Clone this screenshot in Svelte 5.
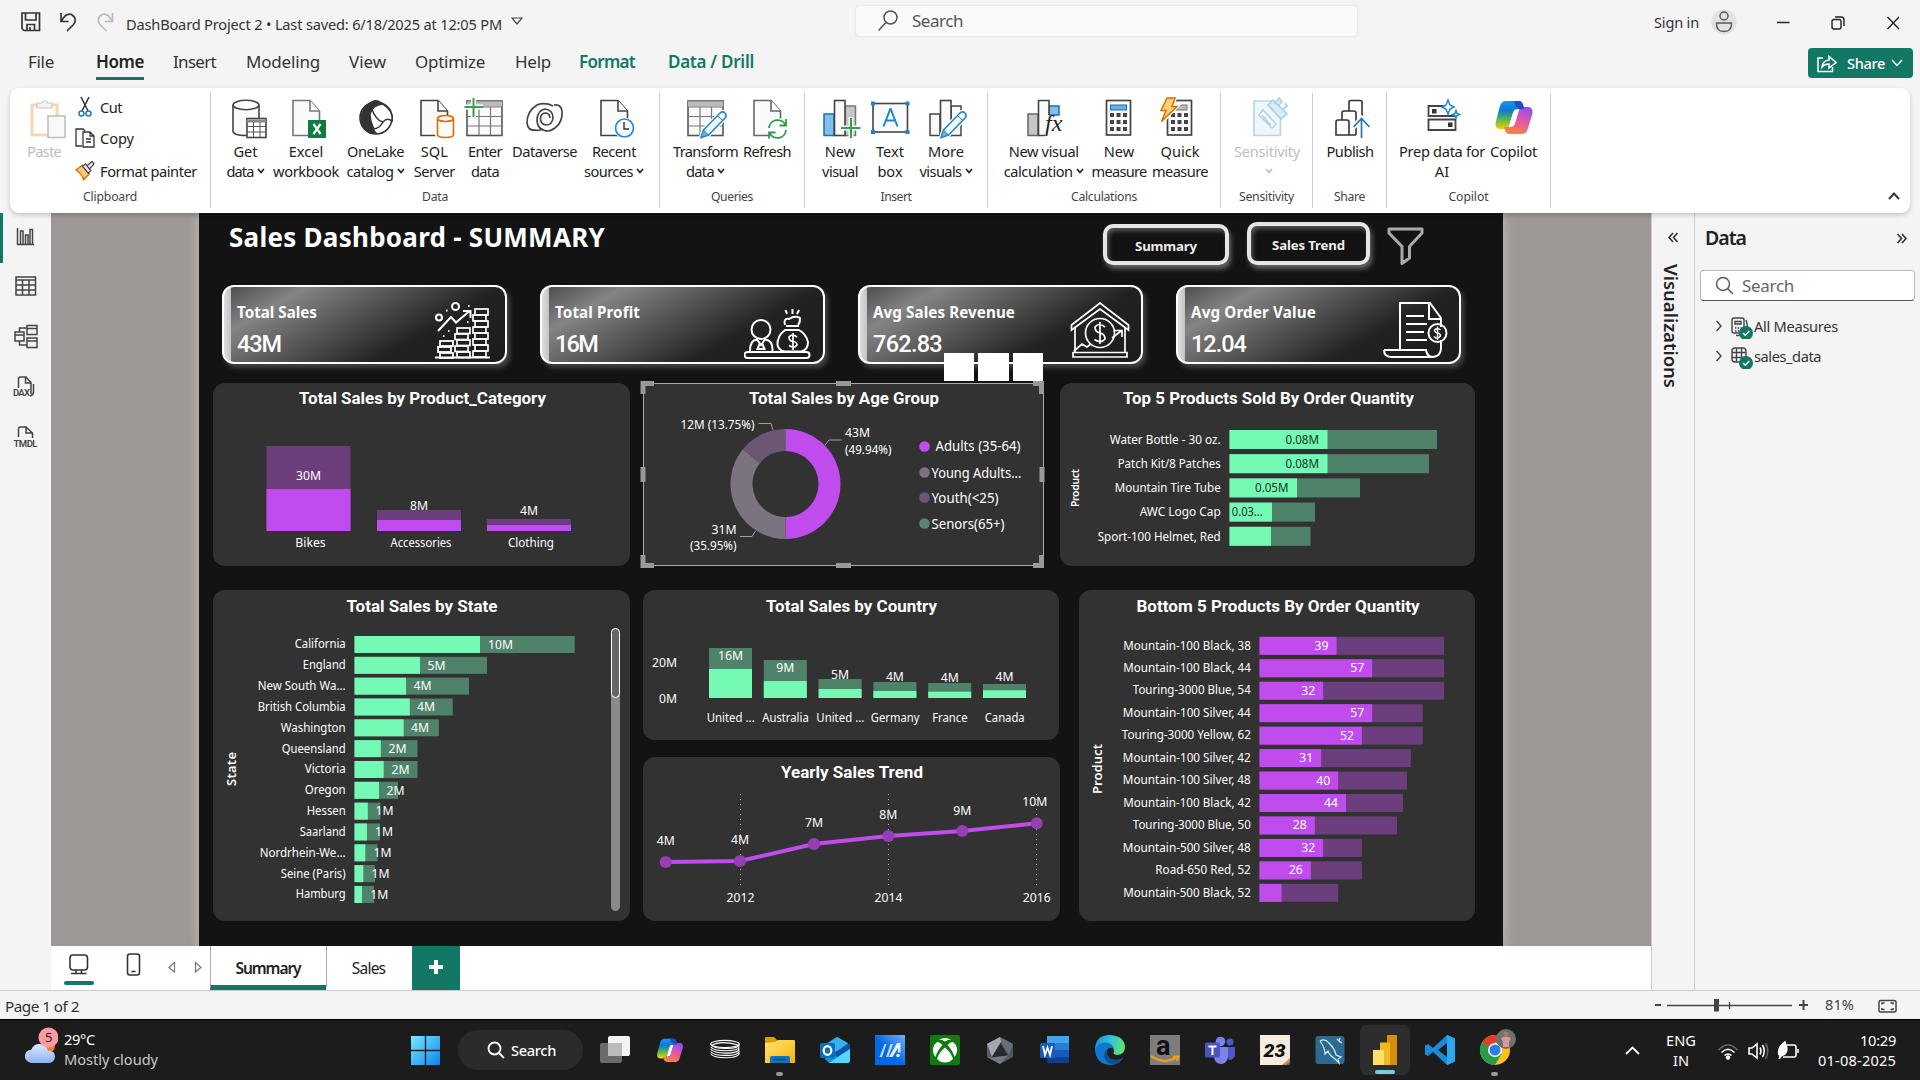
<script>
  // Tightens or loosens tracking so a label takes exactly the given width.
  function fit(node, width) {
    if (!width) return;
    const range = document.createRange();
    range.selectNodeContents(node);
    const now = range.getBoundingClientRect().width;
    node.style.letterSpacing = (width - now) / node.textContent.length + 'px';
  }

  const menu = [
    { t: 'File', w: 26, g: 28 }, { t: 'Home', w: 48, g: 42, cls: 'active' }, { t: 'Insert', w: 43, g: 29 },
    { t: 'Modeling', w: 74, g: 30 }, { t: 'View', w: 37, g: 29 }, { t: 'Optimize', w: 70, g: 29 },
    { t: 'Help', w: 36, g: 30 }, { t: 'Format', w: 56, g: 28, cls: 'ctx' }, { t: 'Data / Drill', w: 86, g: 33, cls: 'ctx' }
  ];

  const groups = [
    { name: 'Data', w: 449, pad: 11, lw: 26, items: [
      { i: 'get', w: 47, a: 'Get', b: 'data', v: 1, bw: 27 }, { i: 'excel', w: 74, a: 'Excel', b: 'workbook', bw: 66 },
      { i: 'onelake', w: 65, a: 'OneLake', b: 'catalog', v: 1, aw: 57, bw: 47 }, { i: 'sql', w: 52.6, a: 'SQL', b: 'Server', bw: 41 },
      { i: 'enter', w: 48.8, a: 'Enter', b: 'data', aw: 34, bw: 28 }, { i: 'dataverse', w: 70.4, a: 'Dataverse', aw: 65 },
      { i: 'recent', w: 68.4, a: 'Recent', b: 'sources', v: 1, aw: 44, bw: 49 }] },
    { name: 'Queries', w: 145, pad: 8.5, lw: 42, items: [
      { i: 'transform', w: 74, a: 'Transform', b: 'data', v: 1, aw: 65, bw: 28 }, { i: 'refresh', w: 49, a: 'Refresh', aw: 48 }] },
    { name: 'Insert', w: 183, pad: 10, lw: 31, items: [
      { i: 'newvis', w: 50, a: 'New', b: 'visual', bw: 36 }, { i: 'textbox', w: 50, a: 'Text', b: 'box' },
      { i: 'morevis', w: 62, a: 'More', b: 'visuals', v: 1, bw: 42 }] },
    { name: 'Calculations', w: 233, pad: 10, lw: 66, items: [
      { i: 'calcvis', w: 91.4, a: 'New visual', b: 'calculation', v: 1, aw: 70, bw: 69 }, { i: 'measure', w: 59.2, a: 'New', b: 'measure', bw: 55 },
      { i: 'quick', w: 62.8, a: 'Quick', b: 'measure', bw: 56 }] },
    { name: 'Sensitivity', w: 92, pad: 10, lw: 55, items: [{ i: 'sens', w: 72, a: 'Sensitivity', b: '', v: 1, aw: 66, off: 1 }] },
    { name: 'Share', w: 74, pad: 12, lw: 31, items: [{ i: 'publish', w: 50, a: 'Publish', aw: 47 }] },
    { name: 'Copilot', w: 164, pad: 9, lw: 40, items: [
      { i: 'prep', w: 92, a: 'Prep data for', b: 'AI', aw: 86 }, { i: 'copilot', w: 51, a: 'Copilot', aw: 47 }] }
  ];

  const kpis = [
    { t: 'Total Sales', tw: 80, v: '43M', vw: 44, box: '426 301 68 60' },
    { t: 'Total Profit', tw: 85, v: '16M', vw: 42, box: '744 301 68 60' },
    { t: 'Avg Sales Revenue', tw: 142, v: '762.83', vw: 69, box: '1062 301 68 60' },
    { t: 'Avg Order Value', tw: 125, v: '12.04', vw: 55, box: '1380 301 68 60' }
  ];

  const categories = [
    { x: 266.5, top: 446, mid: 489, v: '30M', ly: 475.5, n: 'Bikes' },
    { x: 377, top: 510, mid: 520, v: '8M', ly: 505.5, n: 'Accessories', nw: 61 },
    { x: 487, top: 519, mid: 525, v: '4M', ly: 511, n: 'Clothing', nw: 46 }
  ];

  const top5 = [
    ['Water Bottle - 30 oz.', 1327.5, 1437, '0.08M', 111], ['Patch Kit/8 Patches', 1327.5, 1429, '0.08M', 103],
    ['Mountain Tire Tube', 1297, 1360, '0.05M', 106], ['AWC Logo Cap', 1272, 1315, '0.03...', 81], ['Sport-100 Helmet, Red', 1271, 1310.5, '', 123]
  ];

  const states = [
    ['California', 480, 574.7, '10M', 488], ['England', 420, 487, '5M', 427.5], ['New South Wa...', 406, 469, '4M', 413.5],
    ['British Columbia', 409.8, 452.7, '4M', 417], ['Washington', 403.7, 438.8, '4M', 411], ['Queensland', 380.8, 417.5, '2M', 388.5],
    ['Victoria', 383.7, 417.5, '2M', 391.5], ['Oregon', 379, 398, '2M', 386.5], ['Hessen', 367.8, 380.4, '1M', 375.5],
    ['Saarland', 367, 380, '1M', 375], ['Nordrhein-We...', 365.3, 377.5, '1M', 373.5], ['Seine (Paris)', 363.3, 375, '1M', 371.5],
    ['Hamburg', 362, 374, '1M', 370.3]
  ];
  const stateW = [51, 43, 88, 88, 65, 64, 41, 41, 39, 46, 86, 65, 50];

  const countries = [
    ['United ...', 648, 669, '16M', 655.7, 48], ['Australia', 660, 681, '9M', 667.7, 46.5], ['United ...', 679, 689, '5M', 675, 48],
    ['Germany', 682, 691, '4M', 676.7, 48.5], ['France', 683, 691.7, '4M', 677.7, 35.5], ['Canada', 684, 690.3, '4M', 676.7, 40]
  ];

  const bottom = [
    ['Mountain-100 Black, 38', 750, 1022, '39'], ['Mountain-100 Black, 44', 840, 1022, '57'], ['Touring-3000 Blue, 54', 716, 1022, '32'],
    ['Mountain-100 Silver, 44', 840, 968, '57'], ['Touring-3000 Yellow, 62', 814, 968, '52'], ['Mountain-100 Silver, 42', 711, 938, '31'],
    ['Mountain-100 Silver, 48', 754, 928, '40'], ['Mountain-100 Black, 42', 774, 918, '44'], ['Touring-3000 Blue, 50', 695, 903, '28'],
    ['Mountain-500 Silver, 48', 716, 814, '32'], ['Road-650 Red, 52', 685, 814, '26'], ['Mountain-500 Black, 52', 611, 754, '']
  ].map(([n, a, b, v]) => [n, 1040 + a / 2.529, 1040 + b / 2.529, v]);
  const bottomW = [127.5, 127.5, 118, 128, 129, 128, 128, 127.5, 118, 128, 95.5, 127.5];

  const years = [
    [665.7, 862, '4M', 840.7], [740, 861, '4M', 839.7], [814, 844, '7M', 822.7],
    [888.3, 836, '8M', 814.7], [962.3, 831, '9M', 810.7], [1036.7, 823.3, '10M', 801.7]
  ];

  const polar = (r, f) => `${785.5 + r * Math.sin(f * 2 * Math.PI)},${484 - r * Math.cos(f * 2 * Math.PI)}`;
  const arc = (a, b) => `M${polar(55, a)}A55,55 0 0 1 ${polar(55, b)}L${polar(33, b)}A33,33 0 0 0 ${polar(33, a)}Z`;

  const apps = ['task', 'copilot', 'disc', 'folder', 'outlook', 'mdesign', 'xbox', 'gem', 'word', 'edge', 'amazon', 'teams', 'cal', 'mysql', 'pbi', 'vscode', 'chrome'];
</script>

{#snippet txt(x, y, s, a = 'middle', w = undefined, cls = '')}
  <text {x} y={y + 4} text-anchor={a} textLength={w} lengthAdjust="spacingAndGlyphs" class={cls}>{s}</text>
{/snippet}

{#snippet head(x, y, s, w)}
  <text {x} y={y + 5.8} text-anchor="middle" textLength={w} lengthAdjust="spacingAndGlyphs" class="head">{s}</text>
{/snippet}

{#snippet sheet(c = '#444')}
  <path d="M7 3.5H24L33.5 14V38.5H7Z" fill="#fafafa" stroke={c} stroke-width="1.6" />
  <path d="M24 3.5V14H33.5" fill="#fff" stroke={c} stroke-width="1.6" />
{/snippet}

{#snippet pencil()}
  <path d="M15 40.5L17.5 33L34.5 15.5Q37 14 39 16T39.5 20.5L22.5 38Z" fill="#fff" stroke="#fff" stroke-width="4" />
  <path d="M15 40.5L17.5 33L34.5 15.5Q37 14 39 16T39.5 20.5L22.5 38Z" fill="#f4faff" stroke="#1a86d0" stroke-width="1.5" />
  <path d="M15 40.5L17.5 33L22.5 38Z" fill="#69aee6" stroke="#1a86d0" />
  <path d="M31.5 18.5L36.5 23.5" stroke="#1a86d0" />
{/snippet}

{#snippet calculator()}
  <rect x="7.5" y="3.5" width="24" height="34.5" fill="#fafafa" stroke="#444" stroke-width="1.7" />
  {#each [16, 23, 30] as y}{#each [11, 17.5, 24] as x}<rect {x} {y} width="4" height="4" fill="#444" />{/each}{/each}
{/snippet}

{#snippet copilotMark()}
  <path d="M12 4H25Q28 4 29 8L30 12H24Q20 12 19 16L15 29Q14 32 10 32H6Q0 32 2 24L6 9Q7.500 4 12 4Z" fill="url(#cpA)" />
  <path d="M28 37H15Q12 37 11 33L10 30H16Q20 30 21 26L25 13Q26 10 30 10H34Q40 10 38 18L34 31Q32.500 37 28 37Z" fill="url(#cpB)" />
  <path d="M20 4H25Q28 4 29.500 9L30 12H26Q22 12 20 4Z" fill="#1a4fc9" />
  <path d="M19 16Q20 12.500 23 12.500H25L21 26Q20 29.500 17 29.500H15Z" fill="#fff" />
{/snippet}

{#snippet icon(n)}
  <svg class="ico" viewBox="0 0 40 42" width="40" height="42">
    {#if n === 'get'}
      <path d="M7 8V34C7 37 13 38.500 20 38.500S33 37 33 34V8" fill="#fafafa" stroke="#444" stroke-width="1.6" />
      <ellipse cx="20" cy="8" rx="13" ry="4.700" fill="#fff" stroke="#444" stroke-width="1.6" />
      <rect x="21" y="21.500" width="19" height="19" fill="#fff" stroke="#444" stroke-width="1.6" />
      <path d="M21 24H40" stroke="#888" stroke-width="3" /><path d="M21 29.500H40M21 35H40M27.500 25V40M34 25V40" stroke="#555" />
    {:else if n === 'excel'}
      {@render sheet('#777')}<rect x="22" y="23" width="18" height="18" fill="#107c41" />
      <path d="M27.500 27L34.500 37M34.500 27L27.500 37" stroke="#fff" stroke-width="2.200" />
    {:else if n === 'onelake'}
      <circle cx="20" cy="21" r="16" fill="#fff" stroke="#333" stroke-width="1.6" />
      <path d="M12 7Q20 -1 27 7Q17 6 14 17Q14 25 19 34Q22 37.500 24 36Q12 39 6 29Q1 16 12 7Z" fill="#333" />
      <path d="M14 17Q16 8 27 7Q38 14 36 24Q31 20 27 25Q24 31 18 32Q14 24 14 17Z" fill="#fff" stroke="#333" stroke-width="1.500" />
      <path d="M15 10Q20 24 27 25" stroke="#333" stroke-width="1.500" fill="none" />
    {:else if n === 'sql'}
      {@render sheet()}
      <path d="M23.500 22V37C23.500 42 39.500 42 39.500 37V22" fill="#fff" stroke="#fff" stroke-width="5" />
      <path d="M23.500 22V37.500C23.500 41.500 39.500 41.500 39.500 37.500V22" fill="#fafafa" stroke="#dd6b00" stroke-width="1.6" />
      <ellipse cx="31.500" cy="21.500" rx="8" ry="3" fill="#fff" stroke="#dd6b00" stroke-width="1.6" />
    {:else if n === 'enter'}
      <rect x="2" y="4" width="35" height="34.500" fill="#fafafa" stroke="#555" stroke-width="1.6" />
      <path d="M2 7H37" stroke="#bbb" stroke-width="5" /><path d="M2 19.500H37M2 29H37M14 10V38M25.500 10V38M2 10H37" stroke="#777" stroke-width="1.200" />
      <path d="M8.500 -1V20M-1.500 10H18" stroke="#fff" stroke-width="5" /><path d="M8.500 1V20M-.5 10H18" stroke="#36a04f" stroke-width="2" />
    {:else if n === 'dataverse'}
      <g fill="none" stroke="#444" stroke-width="1.700"><path d="M29 8Q36 7 37 14Q38 29 24 34Q12 34 12 22Q13 13 20 12Q28 13 28 21Q27 28 21 28Q15 27 15.500 21Q16 16 21 16Q25 17 25 21" />
      <path d="M28 9Q20 5 12 8Q2 14 2 26Q3 34 10 33Q14 34 18 32" /></g>
    {:else if n === 'recent'}
      {@render sheet()}<circle cx="30.500" cy="31" r="10.500" fill="#fff" /><circle cx="30.500" cy="31" r="9" fill="#f6fbff" stroke="#2a88c8" stroke-width="1.700" />
      <path d="M30 25V32H35" fill="none" stroke="#333" stroke-width="1.400" />
    {:else if n === 'transform'}
      <rect x="2" y="4" width="35" height="34.500" fill="#fafafa" stroke="#555" stroke-width="1.6" />
      <path d="M2 7H37" stroke="#bbb" stroke-width="5" /><path d="M2 19.500H37M2 29H37M14 10V38M25.500 10V38M2 10H37" stroke="#777" stroke-width="1.200" />
      {@render pencil()}
    {:else if n === 'refresh'}
      {@render sheet('#666')}<circle cx="30.500" cy="32" r="11" fill="#fff" />
      <path d="M22 31A8.700 8.700 0 0 1 38.500 28M39 33A8.700 8.700 0 0 1 22.500 36M39 22V28.500H32.500M22 41.500V35.500H28.500" fill="none" stroke="#2f9a4a" stroke-width="1.800" />
    {:else if n === 'newvis'}
      <rect x="4" y="17" width="10" height="21.500" fill="#83beec" stroke="#1a6fb5" stroke-width="1.500" /><rect x="25" y="9" width="10.500" height="29.500" fill="#c8c6c4" stroke="#777" stroke-width="1.500" />
      <rect x="14.500" y="3.500" width="10.500" height="35" fill="#fafafa" stroke="#444" stroke-width="1.6" />
      <path d="M31 20V41M20 31H41" stroke="#fff" stroke-width="5" /><path d="M31 21V41M21 31H40.500" stroke="#36a04f" stroke-width="2.200" />
    {:else if n === 'textbox'}
      <rect x="3" y="6.500" width="34.500" height="28.500" fill="#fafafa" stroke="#444" stroke-width="1.6" />
      <path d="M13.500 29.500L20.300 12H20.700L27.500 29.500M16 23.500H25" fill="none" stroke="#1a86d0" stroke-width="2" />
      {#each [1, 35.5] as x}{#each [4.5, 33] as y}<rect {x} {y} width="4" height="4" fill="#1a86d0" />{/each}{/each}
    {:else if n === 'morevis'}
      <rect x="4" y="17" width="10" height="21.500" fill="#fafafa" stroke="#444" stroke-width="1.500" /><rect x="25" y="9" width="10" height="29.500" fill="#fafafa" stroke="#444" stroke-width="1.500" />
      <rect x="14.500" y="3.500" width="10.500" height="35" fill="#fafafa" stroke="#444" stroke-width="1.6" />{@render pencil()}
    {:else if n === 'calcvis'}
      <rect x="4" y="17" width="10" height="21.500" fill="#c8c6c4" stroke="#666" stroke-width="1.500" /><rect x="25" y="9" width="10" height="9" fill="#83beec" stroke="#1a6fb5" stroke-width="1.500" />
      <path d="M21 38.500H14.500V3.500H25V18" fill="#fafafa" stroke="#444" stroke-width="1.6" />
      <text x="21" y="34" class="fx">fx</text>
    {:else if n === 'measure'}
      {@render calculator()}<rect x="11.500" y="8" width="16" height="5" fill="#69aee6" stroke="#1a6fb5" />
    {:else if n === 'quick'}
      {@render calculator()}<rect x="16" y="8" width="11" height="5" fill="#bbb" stroke="#777" />
      <path d="M6 1H15L12 9H17L2 25L6 13H0Z" fill="#fff" stroke="#fff" stroke-width="4" /><path d="M7 1H15L12 9.500H17L1.500 24.500L6 13.500H1Z" fill="#fbd079" stroke="#dd6b00" stroke-width="1.500" />
    {:else if n === 'sens'}
      <g opacity=".75"><path d="M7 4H24L33.500 14V38.500H7Z" fill="#eaf4fb" stroke="#9fc9e6" stroke-width="1.700" />
      <path d="M12 18L16 13L29 27L25 31ZM15 18L24 28" fill="#fff" stroke="#8fc1e2" stroke-width="1.500" />
      <path d="M21 8L26 3L40 17L34 22ZM27 7L32 1L35 5L31 9M36 12L40 9L38 6" fill="#cde5f4" stroke="#8fc1e2" stroke-width="1.700" /></g>
    {:else if n === 'publish'}
      <path d="M6 38V25Q6 23 8 23H17Q19 23 19 25V38ZM12 23V16Q12 14 14 14H24Q26 14 26 16V38M19 38H26M19 14V5Q19 3.500 21 3.500H30Q32 3.500 32 5V20" fill="none" stroke="#333" stroke-width="1.6" />
      <path d="M31.500 41V22M23.500 30L31.500 21.500L39.500 30" fill="none" stroke="#fff" stroke-width="5" /><path d="M31.500 41V22M23.500 30L31.500 21.500L39.500 30" fill="none" stroke="#2878ac" stroke-width="1.700" />
    {:else if n === 'prep'}
      <path d="M24 9H6.500V19H34M6.500 22.500H33.500V33H6.500Z" fill="#fafafa" stroke="#444" stroke-width="1.800" /><rect x="10" y="12" width="4.500" height="4.500" fill="#333" /><rect x="26" y="25.500" width="4.500" height="4.500" fill="#333" />
      <path d="M26 3L28 8L32 10L28 12L26 17L24 12L20 10L24 8ZM34 13.500L35 16.500L37.500 17.500L35 18.500L34 21L33 18.500L30.500 17.500L33 16.500Z" fill="#fff" stroke="#1a86d0" stroke-width="1.500" />
    {:else}{@render copilotMark()}{/if}
  </svg>
{/snippet}

<svg width="0" height="0" class="defs">
  <defs>
    <linearGradient id="cpA" x1="0" y1="0" x2="0" y2="1"><stop offset="0" stop-color="#0b9bf0" /><stop offset=".35" stop-color="#1474d8" /><stop offset=".6" stop-color="#3fb45c" /><stop offset="1" stop-color="#f5d000" /></linearGradient>
    <linearGradient id="cpB" x1=".6" y1="0" x2=".2" y2="1"><stop offset="0" stop-color="#9b4df0" /><stop offset=".5" stop-color="#ea5a9a" /><stop offset="1" stop-color="#f98a3a" /></linearGradient>
    <linearGradient id="edge" x1="0" y1=".3" x2="1" y2=".5"><stop offset="0" stop-color="#1b8fe0" /><stop offset=".5" stop-color="#35c1d8" /><stop offset="1" stop-color="#62e36a" /></linearGradient>
    <linearGradient id="win" x1="0" y1="0" x2="1" y2="1"><stop offset="0" stop-color="#78eaff" /><stop offset="1" stop-color="#0a84f0" /></linearGradient>
    <linearGradient id="cloud" x1="0" y1="0" x2="0" y2="1"><stop offset="0" stop-color="#dbe8ff" /><stop offset="1" stop-color="#8db4f2" /></linearGradient>
    <linearGradient id="fold" x1="0" y1="0" x2="1" y2="1"><stop offset="0" stop-color="#ffe27a" /><stop offset="1" stop-color="#f8b500" /></linearGradient>
    <linearGradient id="md" x1="0" y1="1" x2="1" y2="0"><stop offset=".45" stop-color="#0368e6" /><stop offset="1" stop-color="#6fb0fb" /></linearGradient>
  </defs>
</svg>

<div class="window">
  <header class="titlebar">
    <svg class="quick" width="96" height="24" viewBox="20 10 96 24" fill="none" stroke="#333" stroke-width="1.700">
      <path d="M22 13H39.500V30.500H24L22 28.500ZM25.500 13V20H36V13M27 30V24.500H34.500V30M30 27V30" />
      <path d="M61 13V21.500H68.500M61.500 21Q66 12.500 71.500 14.500Q78 18.500 73.500 24.500L67 31" />
      <path d="M112.500 13V21.500H105M112 21Q107.500 12.500 102 14.500Q95.500 18.500 100 24.500L106.500 31" stroke="#bbb" />
    </svg>
    <span class="doc" use:fit={376}>DashBoard Project 2 • Last saved: 6/18/2025 at 12:05 PM</span>
    <svg class="tri" width="12" height="8" viewBox="0 0 12 8" fill="none" stroke="#444" stroke-width="1.200"><path d="M1 1H11L6 7Z" /></svg>
    <div class="search">
      <svg width="20" height="22" viewBox="0 0 20 22" fill="none" stroke="#555" stroke-width="1.500"><circle cx="12.500" cy="7.500" r="6.500" /><path d="M8 12.500L.5 20.500" /></svg>
      <span use:fit={51}>Search</span>
    </div>
    <span class="signin" use:fit={45}>Sign in</span>
    <svg class="avatar" width="26" height="26" viewBox="0 0 26 26"><circle cx="13" cy="13" r="12.500" fill="#e3e1df" /><g fill="none" stroke="#555" stroke-width="1.400"><circle cx="13" cy="7" r="4" /><path d="M5.500 14H20.500Q21 22.500 13 22.500T5.500 14Z" /></g></svg>
    <svg class="winbtns" width="124" height="16" viewBox="1776 15 124 16" fill="none" stroke="#222" stroke-width="1.400"><path d="M1777 22.500H1789.500M1887.500 17L1899 29M1899 17L1887.500 29" /><rect x="1832" y="19.500" width="9" height="9.500" rx="2" /><path d="M1835 17H1841Q1844 17 1844 20V26" /></svg>
  </header>

  <nav class="menubar">
    {#each menu as m}<span class="mi {m.cls ?? ''}" style="margin-left:{m.g}px;width:{m.w}px"><b use:fit={m.w}>{m.t}</b></span>{/each}
    <button class="share">
      <svg width="20" height="20" viewBox="0 0 20 20" fill="none" stroke="#fff" stroke-width="1.500"><path d="M6 5H1V18.500H15.500V14M5 14Q6 7.500 12 7V3.500L19 9.500L12 15V11Q7.500 11 5 14Z" /></svg>
      <span use:fit={38}>Share</span>
      <svg width="12" height="8" viewBox="0 0 12 8" fill="none" stroke="#fff" stroke-width="1.500"><path d="M1 1L6 6.500L11 1" /></svg>
    </button>
  </nav>

  <section class="ribbon">
    <div class="group clip">
      <div class="body">
        <div class="rb off paste">
          <svg class="ico" viewBox="0 0 40 42" width="40" height="42"><g opacity=".65"><path d="M6 8H31V38H6Z" fill="#fff" stroke="#f0c48a" stroke-width="3" /><path d="M11 11V6H16Q18.500 1 21.500 6H26V11Z" fill="#eee" stroke="#aaa" stroke-width="1.200" /><rect x="22" y="19" width="17" height="21.500" fill="#f6f6f6" stroke="#999" stroke-width="1.500" /></g></svg>
          <span class="l1" use:fit={34}>Paste</span>
        </div>
        <div class="minis">
          <div class="mini"><svg width="20" height="20" viewBox="0 0 20 20" fill="none" stroke="#333" stroke-width="1.500"><path d="M6 0L13 14M14 0L7 14" /><g stroke="#2878ac"><circle cx="6.500" cy="16.500" r="2.500" /><circle cx="13.500" cy="16.500" r="2.500" /></g></svg><span use:fit={22}>Cut</span></div>
          <div class="mini"><svg width="20" height="20" viewBox="0 0 20 20" fill="#fff" stroke="#333" stroke-width="1.300"><path d="M7 18H1V1H8L10 3" /><path d="M8 4H15L19 8V19H8ZM15 4V8H19M11 11H16M11 14H16" /></svg><span use:fit={34}>Copy</span></div>
          <div class="mini"><svg width="21" height="20" viewBox="0 0 21 20"><path d="M1 9L8 4L15 13L9 19Q8 14 1 9Z" fill="#fbc97c" stroke="#dd6b00" stroke-width="1.400" /><path d="M8 5L11 2.500L16.500 9.500L14 12.500ZM12.500 4.500L18 0L20 2.500L15 8" fill="#eee" stroke="#444" stroke-width="1.300" /></svg><span use:fit={97}>Format painter</span></div>
        </div>
      </div>
      <span class="gname"><span use:fit={54}>Clipboard</span></span>
    </div>
    {#each groups as g}
      <div class="group" style="width:{g.w}px">
        <div class="body" style="padding-left:{g.pad}px">
          {#each g.items as b}
            <div class="rb" class:off={b.off} style="width:{b.w}px">
              {@render icon(b.i)}
              <span class="l1"><span use:fit={b.aw}>{b.a}</span></span>
              <span class="l2"><span use:fit={b.bw}>{b.b ?? ''}</span>{#if b.v}<svg width="8" height="6" viewBox="0 0 8 6" fill="none" stroke="currentColor" stroke-width="1.700"><path d="M1 1L4 4.500L7 1" /></svg>{/if}</span>
            </div>
          {/each}
        </div>
        <span class="gname"><span use:fit={g.lw}>{g.name}</span></span>
      </div>
    {/each}
    <svg class="collapse" width="12" height="8" viewBox="0 0 12 8" fill="none" stroke="#333" stroke-width="2"><path d="M1 7L6 1.500L11 7" /></svg>
  </section>

  <main class="work">
    <aside class="rail">
      <svg width="51" height="270" viewBox="0 213 51 270" fill="none" stroke="#444" stroke-width="1.500">
        <rect x="0" y="213" width="3" height="50" fill="#117865" stroke="none" />
        <path d="M17.500 228V244.500H34M20.500 244V231H23V244M25.500 244V235H28V244M30 244V229.500H32.500V244" />
        <path d="M16 277H35.500V295H16ZM16 280H35.500M16 285H35.500M16 290H35.500M22.500 280V295M29 280V295" />
        <path d="M15 332H24V341H15ZM27 325.500H37V334.500H27ZM27 338H37V347.500H27ZM15 335H24M27 328.500H37M27 341H37M19.500 332V328H27M19.500 341V345H27" />
        <path d="M18.500 388V379Q18.500 377 20.500 377H26L31 382.500V394M25.500 377V383H31M33.500 384V392Q33.500 395 30 396" />
        <path d="M18.500 437V429Q18.500 427 20.500 427H26L32.500 433V438M26 427V433H32" />
        <text x="13" y="396" class="rt" textLength="17">DAX</text><text x="13.500" y="446.500" class="rt" textLength="24">TMDL</text>
      </svg>
    </aside>

    <div class="center">
      <div class="canvas">
        <div class="page">
          <div class="phead">
            <h1><span use:fit={376}>Sales Dashboard - SUMMARY</span></h1>
            <div class="nav first"><span use:fit={62}>Summary</span></div>
            <div class="nav second"><span use:fit={73}>Sales Trend</span></div>
            <svg class="funnel" width="37" height="39" viewBox="0 0 37 39" fill="none" stroke="#aaa" stroke-width="3"><path d="M2 2H35V6L22.500 19.500V31L15 36.500V19.500L2 6Z" stroke-linejoin="round" /></svg>
          </div>

          <div class="kpis">
            {#each kpis as k, i}
              <div class="kpi">
                <div class="kt"><span class="kl" use:fit={k.tw}>{k.t}</span><span class="kv" use:fit={k.vw}>{k.v}</span></div>
                <svg width="68" height="60" viewBox={k.box} fill="none" stroke="#fff" stroke-width="2">
                  {#if i === 0}
                    <path d="M435 358.500H490" />
                    {#each [343, 349, 355] as y, j}<rect x={j % 2 ? 438 : 440} y={y - 1} width="13" height="5" stroke-width="1.800" />{/each}
                    {#each [329, 335, 341, 347, 353] as y, j}<rect x={j % 2 ? 455 : 457} {y} width="13" height="5.500" stroke-width="1.700" />{/each}
                    {#each [310, 316, 322, 328, 334, 340, 346, 352] as y, j}<rect x={j % 2 ? 473 : 475} {y} width="13" height="6" stroke-width="1.700" />{/each}
                    <path d="M438 332L451 318L456 323.500L469 312.500M463 312H470.500V319" /><circle cx="439" cy="318.500" r="3" /><circle cx="455.500" cy="307.500" r="3.500" />
                    <path d="M446 311.500h1.500M468 307h1.500M448 332h1.500M443 337h1.500M467 323h1.500" />
                  {:else if i === 1}
                    <rect x="744.500" y="353" width="65" height="6" rx="3" /><circle cx="761" cy="330.500" r="9.500" />
                    <path d="M750 352Q750 341 757 340.500L761 346L765 340.500Q773 341 772.500 352M760 344L757.500 350H764.500L762 344" />
                    <path d="M785 331Q777 337 777.500 346Q779 352 785 352.500H801Q808 351 808 343Q806 335 799 331ZM786 327H799M785 326Q783 319 789 320Q795 316 800 319Q800 324 798 326M787 315L785.500 311M792.500 315V310M797 315L799 311" />
                    <path d="M797 338Q792 334 789 338Q789 342 793 342.500T797 346Q794 350 789 346.500M793 334V351" stroke-width="1.700" />
                  {:else if i === 2}
                    <path d="M1071.500 326L1100 304L1128.500 326V331L1100 310L1071.500 331ZM1075 329V353M1125 329V353M1073 353.500H1127V358H1073Z" stroke-width="1.700" /><circle cx="1100" cy="334" r="14.500" stroke-width="1.700" />
                    <path d="M1105 328Q1099 323 1095 328Q1095 333 1100 334T1105 340Q1101 345 1094.500 340.500M1100 323V345M1074 352L1082 345L1087 348L1091 345M1112 339L1121 332M1115 331.500H1122V338" stroke-width="1.700" />
                  {:else}
                    <path d="M1400 352V304H1430L1441 319V328M1429 304V320H1441M1406 317H1424M1406 325H1427M1406 333H1424M1406 341H1427M1384 351H1426Q1427 358 1433 358H1392Q1384 358 1384 351M1433 358Q1441 357 1441 349V341" /><circle cx="1437.500" cy="334" r="9" />
                    <path d="M1440.500 331Q1437 328 1434.500 331Q1435 334 1437.500 334T1440.500 337Q1437 341 1434 337.500M1437.500 327.500V341" stroke-width="1.400" />
                  {/if}
                </svg>
              </div>
            {/each}
          </div>

          <div class="row r1">
            <svg class="card" width="417" height="183" viewBox="213 383 417 183">
              {@render head(422.5, 398, 'Total Sales by Product_Category', 247)}
              {#each categories as c}
                <rect x={c.x} y={c.top} width="84" height={531 - c.top} fill="#6c3e7e" /><rect x={c.x} y={c.mid} width="84" height={531 - c.mid} fill="#c04cee" />
                {@render txt(c.x + 42, c.ly, c.v)}{@render txt(c.x + 44, 543, c.n, 'middle', c.nw)}
              {/each}
            </svg>

            <div class="selected">
              <svg width="401" height="183" viewBox="643 383 401 183">
                {@render head(844, 398, 'Total Sales by Age Group', 190)}
                <path d={arc(0, .4994)} fill="#c04cee" /><path d={arc(.4994, .8589)} fill="#7c7381" /><path d={arc(.8589, .9964)} fill="#6b5773" /><path d={arc(.9964, 1)} fill="#5c8470" />
                <path d="M758.500 423.500H771L773 430M841.500 440H829L825 445M740 536.500H752L755.500 531" fill="none" stroke="#a0a0a0" />
                {@render txt(680.6, 424.5, '12M (13.75%)', 'start', 74)}{@render txt(845, 432.5, '43M', 'start', 25)}{@render txt(845, 449.5, '(49.94%)', 'start', 46.5)}
                {@render txt(736.5, 529.5, '31M', 'end', 25)}{@render txt(736.5, 545.5, '(35.95%)', 'end', 46.5)}
                <circle cx="924.500" cy="446.500" r="5.300" fill="#c04cee" /><circle cx="924.500" cy="472.500" r="5.300" fill="#7c7381" /><circle cx="924.500" cy="497.500" r="5.300" fill="#6b5773" /><circle cx="924.500" cy="523.500" r="5.300" fill="#5c8470" />
                <g class="legend">{@render txt(935.5, 446.5, 'Adults (35-64)', 'start', 85)}{@render txt(931.5, 473.5, 'Young Adults...', 'start', 90)}{@render txt(931.5, 498.5, 'Youth(<25)', 'start', 67)}{@render txt(931.5, 524.5, 'Senors(65+)', 'start', 73)}</g>
                <rect x="643.500" y="383.500" width="400" height="182" fill="none" stroke="#aaa" />
                <path d="M643 394V383.500H654M1033 383.500H1041.500V394M643 555V565.500H654M1033 565.500H1041.500V555M836 383.500H851M836 565.500H851M643 467V482M1042 467V482" fill="none" stroke="#999" stroke-width="5" />
              </svg>
              <div class="tools"><i></i><i></i><i></i></div>
            </div>

            <svg class="card" width="415" height="183" viewBox="1060 383 415 183">
              {@render head(1268.5, 398, 'Top 5 Products Sold By Order Quantity', 291)}
              <text class="axis small" transform="translate(1079 507) rotate(-90)" textLength="38">Product</text>
              {#each top5 as [n, a, b, v, w], i}
                {@const y = 430 + i * 24.2}
                <rect x="1229.500" {y} width={b - 1229.5} height="19" fill="#4f8369" /><rect x="1229.500" {y} width={a - 1229.5} height="19" fill="#74fab4" />
                {@render txt(1220.7, y + 9.7, n, 'end', w)}
                {#if v}{@render txt(i === 3 ? 1262.8 : a - 8.5, y + 9.7, v, 'end', i === 3 ? 31 : 33.5, 'dark')}{/if}
              {/each}
            </svg>
          </div>

          <div class="row r2">
            <svg class="card" width="417" height="331" viewBox="213 590 417 331">
              {@render head(422, 606.3, 'Total Sales by State', 151)}
              <text class="axis" transform="translate(236 786) rotate(-90)" textLength="34">State</text>
              {#each states as [n, a, b, v, lx], i}
                {@const y = 636 + i * 20.83}
                <rect x="354.500" {y} width={b - 354.5} height="17" fill="#4f8369" /><rect x="354.500" {y} width={a - 354.5} height="17" fill="#74fab4" />
                {@render txt(345.7, y + 8.4, n, 'end', stateW[i])}{@render txt(lx, y + 8.7, v, 'start')}
              {/each}
              <rect x="611" y="628" width="9" height="283" rx="4.500" fill="#8a8a8a" /><rect x="611.500" y="628.500" width="8" height="69" rx="4" fill="#666" stroke="#fff" />
            </svg>

            <div class="stack">
              <svg class="card" width="416" height="150" viewBox="643 590 416 150">
                {@render head(851.5, 606.3, 'Total Sales by Country', 171)}
                {@render txt(677, 662.7, '20M', 'end')}{@render txt(677, 698.7, '0M', 'end')}
                {#each countries as [n, top, mid, v, ly, w], i}
                  {@const x = 709 + i * 54.8}
                  <rect {x} y={top} width="43" height={698 - top} fill="#4f8369" /><rect {x} y={mid} width="43" height={698 - mid} fill="#74fab4" />
                  {@render txt(x + 21.5, ly, v)}{@render txt(x + 21.7, 718, n, 'middle', w)}
                {/each}
              </svg>
              <svg class="card" width="417" height="164" viewBox="643 757 417 164">
                {@render head(852, 772.3, 'Yearly Sales Trend', 142)}
                <path d="M740.500 794V888M888.500 794V888M1036.500 794V888" stroke="#aaa" stroke-dasharray="1 4" />
                <polyline points={years.map((p) => p[0] + ',' + p[1]).join(' ')} fill="none" stroke="#c04cee" stroke-width="4" />
                {#each years as [x, y, v, ly], i}<circle cx={x} cy={y} r="6" fill="#9440b4" />{@render txt(i === 5 ? x - 2 : x, ly, v)}{/each}
                {@render txt(740.5, 897.5, '2012')}{@render txt(888.5, 897.5, '2014')}{@render txt(1036.8, 897.5, '2016')}
              </svg>
            </div>

            <svg class="card" width="396" height="331" viewBox="1079 590 396 331">
              {@render head(1278, 606.3, 'Bottom 5 Products By Order Quantity', 283)}
              <text class="axis" transform="translate(1101.500 794) rotate(-90)" textLength="50">Product</text>
              {#each bottom as [n, a, b, v], i}
                {@const y = 636.8 + i * 22.46}
                <rect x="1259.500" {y} width={b - 1259.5} height="18" fill="#6c3e7e" /><rect x="1259.500" {y} width={a - 1259.5} height="18" fill="#c04cee" />
                {@render txt(1250.8, y + 8.7, n, 'end', bottomW[i])}{@render txt(a - 8, y + 9, v, 'end')}
              {/each}
            </svg>
          </div>
        </div>
      </div>

      <div class="tabs">
        <svg width="159" height="44" viewBox="51 946 159 44" fill="none" stroke="#333" stroke-width="1.6">
          <rect x="70" y="955" width="17.500" height="15" rx="3" /><path d="M71 973.500H86.500M76 970V973M81.500 970V973" /><rect x="64" y="981" width="30" height="4" rx="2" fill="#117865" stroke="none" />
          <rect x="127.500" y="954" width="12" height="21" rx="2.500" /><path d="M131.500 971.500H135.500" />
          <path d="M174.500 962.500L169 967.500L174.500 972ZM195.500 962.500L201 967.500L195.500 972Z" stroke="#777" stroke-width="1.200" />
        </svg>
        <div class="tab on"><span use:fit={65}>Summary</span></div>
        <div class="tab s"><span use:fit={33.5}>Sales</span></div>
        <div class="add"><svg width="14" height="14" viewBox="0 0 14 14"><path d="M7 0V14M0 7H14" stroke="#fff" stroke-width="4" /></svg></div>
      </div>
    </div>

    <aside class="viz">
      <svg width="12" height="11" viewBox="0 0 12 11" fill="none" stroke="#333" stroke-width="1.600"><path d="M6 1L2 5.500L6 10M10.500 1L6.500 5.500L10.500 10" /></svg>
      <span>Visualizations</span>
    </aside>

    <aside class="data">
      <div class="dh"><span use:fit={41}>Data</span><svg width="12" height="11" viewBox="0 0 12 11" fill="none" stroke="#333" stroke-width="1.600"><path d="M1.500 1L5.500 5.500L1.500 10M6 1L10 5.500L6 10" /></svg></div>
      <div class="ds"><svg width="19" height="19" viewBox="0 0 19 19" fill="none" stroke="#555" stroke-width="1.400"><circle cx="8" cy="8" r="6.500" /><path d="M12.500 12.500L18 18" /></svg><span use:fit={52}>Search</span></div>
      {#each ['All Measures', 'sales_data'] as f, i}
        <div class="field">
          <svg width="41" height="26" viewBox="1713 313 41 26" fill="none" stroke="#444" stroke-width="1.400">
            <path d="M1716.500 321L1721 326L1716.500 331" />
            {#if i === 0}<rect x="1732" y="318" width="12" height="15" rx="2" /><path d="M1746 320Q1748 325 1747 333Q1744 336 1736 335.500M1735 321.500H1741V324H1735Z" /><path d="M1735 328H1742M1735 331H1742" stroke-dasharray="1.500 1.300" />
            {:else}<rect x="1732" y="318" width="14" height="14" rx="3" /><path d="M1736.500 318V332M1741.500 318V332M1732 322.500H1746M1732 327.500H1746" />{/if}
            <circle cx="1746" cy="333" r="7" fill="#117865" stroke="none" /><path d="M1743 333L1745.300 335.300L1749.300 331" stroke="#fff" />
          </svg>
          <span use:fit={i ? 67 : 84}>{f}</span>
        </div>
      {/each}
    </aside>
  </main>

  <footer class="status">
    <span use:fit={74}>Page 1 of 2</span>
    <svg width="250" height="28" viewBox="1650 991 250 28" fill="none" stroke="#444" stroke-width="1.500">
      <path d="M1667 1005.500H1792M1729.500 1002V1009" stroke-width="1.300" /><rect x="1714" y="999" width="5" height="12.500" fill="#444" stroke="none" />
      <path d="M1655 1005H1661M1799 1005H1808M1803.500 1000V1010" stroke-width="2" />
      <rect x="1879" y="1000.500" width="17" height="11.500" rx="1.500" /><path d="M1882 1004.500V1003H1884.500M1890.500 1003H1893V1004.500M1893 1008V1009.500H1890.500M1884.500 1009.500H1882V1008" />
      <text x="1825" y="1010" textLength="29" class="zoom">81%</text>
    </svg>
  </footer>

  <footer class="taskbar">
    <div class="weather">
      <svg width="36" height="42" viewBox="22 1026 36 42"><circle cx="48" cy="1046" r="7" fill="#f58220" /><path d="M31 1063Q24 1061 25 1055Q26 1050 31 1050Q34 1043 40 1044Q47 1045 48 1051Q55 1050 55 1057Q54 1063 48 1063Z" fill="url(#cloud)" /><circle cx="48.500" cy="1037.500" r="10" fill="#ff99a4" /><text x="45" y="1042" class="badge">5</text></svg>
      <div><span use:fit={31}>29°C</span><span class="dim" use:fit={94}>Mostly cloudy</span></div>
    </div>
    <svg class="start" width="29" height="29" viewBox="0 0 29 29" fill="url(#win)"><path d="M0 0H13.800V13.800H0ZM15.200 0H29V13.800H15.200ZM0 15.200H13.800V29H0ZM15.200 15.200H29V29H15.200Z" /></svg>
    <div class="pill"><svg width="18" height="18" viewBox="0 0 18 18" fill="none" stroke="#fff" stroke-width="1.800"><circle cx="7.500" cy="7.500" r="6" /><path d="M12 12L17 17" /></svg><span use:fit={45}>Search</span></div>
    <div class="apps">
      {#each apps as a}
        <div class="app" class:run={a === 'folder' || a === 'chrome'} class:cur={a === 'pbi'}>
          <svg width="30" height="30" viewBox="0 0 30 30">
            {#if a === 'task'}<rect x="0" y="8" width="22" height="20" rx="2" fill="#6b6b6b" /><rect x="8" y="1" width="22" height="20" rx="2" fill="#f4f4f4" /><rect x="8" y="8" width="14" height="13" fill="#bbb" />
            {:else if a === 'copilot'}<g transform="translate(1 1) scale(.7)">{@render copilotMark()}</g>
            {:else if a === 'disc'}<g fill="none" stroke="#fff" stroke-width="1.100"><ellipse cx="15" cy="9" rx="14.300" ry="3.600" /><path d="M1.500 10.500Q10 5 28.500 10" />{#each [0, 2.3, 4.6, 6.9, 9.2] as d}<path d="M.7 {9.500 + d}Q3 {13.500 + d} 16 {13.500 + d}T29.300 {9.500 + d * .9}" />{/each}</g>
            {:else if a === 'folder'}<path d="M0 3Q0 2 1 2H9L12 5V12H0Z" fill="#dd9c00" /><path d="M0 8L10 7L13 5H29Q30 5 30 6V28H0Z" fill="url(#fold)" /><path d="M5 28V23Q5 21 7 21H23Q25 21 25 23V28Z" fill="#1173c4" /><path d="M8.500 24.500H21" stroke="#0a4a85" stroke-width="1.500" />
            {:else if a === 'outlook'}<path d="M5 10L17 2L30 10V25Q30 28 27 28H9L5 24Z" fill="#1490df" /><path d="M17 2L28 8L14 18L6 12V9Z" fill="#37b0ee" /><path d="M29 8.500L30 10V14L17 22L14 18Z" fill="#0b52a8" /><path d="M9 28L30 14V25Q30 28 27 28Z" fill="#50d9ff" /><rect x="0" y="8" width="15" height="15" rx="1.500" fill="#0f6cbd" /><ellipse cx="7.500" cy="15.500" rx="3.800" ry="4.300" fill="none" stroke="#fff" stroke-width="2.200" />
            {:else if a === 'mdesign'}<rect width="30" height="30" fill="url(#md)" /><path d="M9.500 9H11.500L7 22H4.500ZM15.500 9H18L13.500 22H11Z" fill="#b9d6fb" /><path d="M22 8H25.500V17.500H23V13L17.500 22H14Z" fill="#e6f0ff" /><circle cx="23" cy="20.500" r="1.700" fill="#fff" />
            {:else if a === 'xbox'}<rect width="30" height="30" rx="2" fill="#107c10" /><path d="M9 4.500Q15 1.500 21 4.500Q18 4.500 15 6.500Q12 4.500 9 4.500Z" fill="#fff" /><path d="M7 7Q10 7 12.500 10Q7 16 5.500 22Q2.500 18 3 13.500Q4 9 7 7ZM23 7Q20 7 17.500 10Q23 16 24.500 22Q27.500 18 27 13.500Q26 9 23 7ZM15 12.500Q21.500 18 23 24Q19.500 27.500 15 27.500T7 24Q8.500 18 15 12.500Z" fill="#fff" />
            {:else if a === 'gem'}<path d="M15 2L28 9V22L15 29L2 22V9Z" fill="#565b63" /><path d="M15 2L28 9L24 20L16 7L7 22L2 9Z" fill="#686e76" /><path d="M15 2L16 7L7 22L2 9Z" fill="#a0a7b0" /><path d="M15.500 8L23 20.500L6.500 22.500Z" fill="#26292e" /><path d="M6.500 22.500L23 20.500L15 29L2 22Z" fill="#747a82" /><path d="M28 9V22L24 20Z" fill="#50555c" />
            {:else if a === 'word'}<rect x="7" y="1" width="22" height="27" rx="1.500" fill="#185abd" /><path d="M7 1H29V8H7Z" fill="#41a5ee" /><path d="M7 8H29V15H7Z" fill="#2b7cd3" /><path d="M7 22H29V28H7Z" fill="#103f91" /><rect x="0" y="8" width="15" height="15" rx="1.500" fill="#185abd" /><path d="M3 11L5 20L7.500 12.500L10 20L12 11" fill="none" stroke="#fff" stroke-width="1.800" />
            {:else if a === 'edge'}<path d="M0 15Q0 0 15 0Q30 1 30 13Q29 20 22 20Q17 19.500 19 16Q19 12 14.500 12Q5 12 0 15Z" fill="url(#edge)" /><path d="M0 15Q2 8 10 7.500Q18 8 19 14Q14 10.500 11.500 16Q11 24 20 25Q25 25 28 23Q24 30 15 30Q1 29 0 15Z" fill="#1176cf" /><path d="M11.500 15Q7 20 11 25.500Q14 29 19 29.500Q25 28 28 23Q25 25 20 25Q12 24 11.500 15Z" fill="#0d4f96" />
            {:else if a === 'amazon'}<rect width="30" height="30" fill="#7d7d7d" /><text x="6" y="20" class="amz">a</text><path d="M1 21Q14 30 27 22M23 21.500H28.500L27 26" fill="none" stroke="#f29a16" stroke-width="2.200" />
            {:else if a === 'teams'}<circle cx="25" cy="7" r="3.500" fill="#5059c9" /><circle cx="15.500" cy="6.500" r="4.800" fill="#7b83eb" /><path d="M20 12H30V20Q29 25 24 25Z" fill="#5059c9" /><path d="M9 12H23V22Q22 29 16 29T9 22Z" fill="#7b83eb" /><rect x="0" y="7.500" width="15" height="15" rx="1.500" fill="#4b53bc" /><path d="M3.500 11.500H11.500M7.500 11.500V20" stroke="#fff" stroke-width="2" />
            {:else if a === 'cal'}<rect width="30" height="30" fill="#f5ecdf" /><path d="M22 30L30 23V30Z" fill="#e9804a" /><path d="M26 30L30 27V30Z" fill="#2a6f9c" /><text x="3.500" y="22" class="cal" textLength="22" lengthAdjust="spacingAndGlyphs">23</text>
            {:else if a === 'mysql'}<rect x=".5" y="1" width="29" height="28" rx="3" fill="#2c6a92" /><path d="M5 6Q10 3 14 8Q20 14 21 20L26 22L23 24L24 28L19 23Q15 21 13 16L10 19Q10 13 5 6M22 4L25 7M25 3L24 6L27 8" fill="none" stroke="#dceaf3" stroke-width="1.200" />
            {:else if a === 'pbi'}<rect x="17" y="0" width="10" height="30" fill="#d98e0b" /><rect x="10" y="7.500" width="10" height="22.500" fill="#f0b91c" /><rect x="3" y="15" width="11" height="15" fill="#fbe06a" />
            {:else if a === 'vscode'}<path d="M22 0L30 3.500V26.500L22 30L8 17L3 21L0 19.500V10.500L3 9L8 13ZM22 8L13 15L22 22Z" fill="#1a8ad6" fill-rule="evenodd" /><path d="M22 0L30 3.500V26.500L22 30Z" fill="#2aa6f2" />
            {:else}<circle cx="15" cy="15" r="15" fill="#fbc116" /><path d="M15 15L2 7.500A15 15 0 0 1 28 7.500H15Z" fill="#e33b2e" /><path d="M2 7.500A15 15 0 0 0 15 30L21.500 18.700L15 15Z" fill="#2b9a48" /><circle cx="15" cy="15" r="7" fill="#fff" /><circle cx="15" cy="15" r="5.500" fill="#2b7de9" /><circle cx="26" cy="4" r="10" fill="#6f726a" /><path d="M21 3Q26 0 31 3L29 7V12H23V7Z" fill="#d99aa6" /><circle cx="26" cy="-1" r="2.500" fill="#a07a6c" />{/if}
          </svg>
        </div>
      {/each}
    </div>
    <div class="tray">
      <svg class="up" width="15" height="9" viewBox="0 0 15 9" fill="none" stroke="#fff" stroke-width="1.800"><path d="M1 8L7.500 1.500L14 8" /></svg>
      <div class="lang"><span>ENG</span><span>IN</span></div>
      <svg class="sys" width="82" height="24" viewBox="1717 1037 82 24" fill="none" stroke="#fff" stroke-width="1.6">
        <path d="M1718.500 1049Q1728 1039 1737.500 1049" stroke="#666" /><path d="M1721.500 1051.500Q1728 1045 1734.500 1051.500M1724.500 1054.500Q1728 1051.500 1731.500 1054.500" /><circle cx="1728" cy="1056.500" r="1.500" fill="#fff" />
        <path d="M1749 1047V1053H1752L1757 1057V1043L1752 1047ZM1760 1046.500Q1762 1050 1760 1053.500M1762.500 1044Q1766 1050 1762.500 1056" /><path d="M1765.500 1042Q1770 1050 1765.500 1058" stroke="#666" />
        <path d="M1787 1044H1794Q1796 1044 1796 1046V1054Q1796 1056 1794 1056H1783M1798 1048V1052" /><path d="M1779 1054Q1777 1047 1785 1041Q1789 1050 1784 1053.500Q1781 1054 1779 1058" fill="#fff" />
      </svg>
      <div class="clock"><span use:fit={36}>10:29</span><span use:fit={78}>01-08-2025</span></div>
    </div>
  </footer>
</div>

<style>
  :global(body) { margin: 0; background: #f4f4f4; }
  .window { width: 1920px; height: 1080px; display: flex; flex-direction: column; overflow: hidden; background: #f4f4f4; color: #333; font: 14.6px/20px 'Noto Sans', 'Open Sans', sans-serif; white-space: nowrap; }
  .defs { position: absolute; }
  svg { display: block; flex: none; }
  .ico { overflow: visible; }

  .titlebar { height: 43px; flex: none; display: flex; align-items: flex-start; padding-left: 20px; box-sizing: border-box; }
  .quick { margin-top: 10px; }
  .doc { margin: 14px 0 0 10px; width: 377px; }
  .tri { margin: 17px 0 0 8px; }
  .search { width: 501px; height: 30px; margin: 6px 0 0 333px; padding-left: 22px; box-sizing: border-box; background: #fafafa; border-radius: 3px; box-shadow: 0 0 2px #ccc; display: flex; align-items: center; gap: 14px; font-size: 17px; color: #555; }
  .search svg { margin-top: -1px; }
  .signin { margin: 12px 0 0 297px; width: 45px; }
  .avatar { margin: 9px 0 0 12px; }
  .winbtns { margin: 15px 0 0 39px; }

  .menubar { height: 45px; flex: none; display: flex; align-items: flex-start; font-size: 17px; }
  .mi { padding-top: 9px; box-sizing: content-box; height: 25px; border-bottom: 3px solid transparent; }
  .mi b { font-weight: 400; }
  .mi.active { border-color: #117865; color: #222; }
  .mi.active b, .mi.ctx b { font-weight: 600; }
  .mi.ctx { color: #117865; }
  .share { margin: 5px 7px 0 auto; width: 105px; height: 30px; border: 0; border-radius: 4px; background: #117865; color: #fff; display: flex; align-items: center; padding: 0 0 0 9px; font: 500 14.6px 'Noto Sans', sans-serif; gap: 10px; }
  .share span { margin-top: -1px; }
  .share svg:last-child { margin-left: -4px; }

  .ribbon { margin: 0 10px; height: 125px; flex: none; background: #fff; border-radius: 9px; display: flex; box-shadow: 0 2px 5px #0003; position: relative; z-index: 2; color: #222; }
  .group { display: flex; flex-direction: column; box-sizing: border-box; border-right: 1px solid #ccc; margin: 5px 0; height: 115px; }
  .clip { width: 201px; }
  .body { display: flex; height: 93px; }
  .rb { display: flex; flex-direction: column; align-items: center; padding-top: 4px; }
  .rb.off { color: #bdbdbd; }
  .paste { width: 50px; padding-left: 17px; box-sizing: border-box; align-items: flex-start; }
  .paste .ico { margin-left: -1px; }
  .l1 { margin-top: 2px; height: 20px; }
  .l2 { height: 20px; display: flex; align-items: center; gap: 3px; }
  .gname { height: 20px; font-size: 12.200px; text-align: center; color: #444; padding-top: 1px; box-sizing: border-box; }
  .minis { display: flex; flex-direction: column; padding-left: 15px; }
  .mini { height: 32.500px; display: flex; align-items: center; gap: 5px; }
  .minis .mini:first-child { margin-top: -1px; }
  .mini svg { width: 20px; }
  .mini + .mini { padding-top: 1px; }
  .mini:last-child { padding-top: 2px; }
  .collapse { margin: 104px 10px 0 auto; }

  .work { display: flex; height: 777px; flex: none; }
  .rail { width: 51px; flex: none; }
  .rt { font: 600 9.500px Roboto, sans-serif; fill: #444; stroke: none; }
  .center { width: 1600px; flex: none; }
  .canvas { height: 733px; background: #9d9795; display: flex; padding-left: 148px; overflow: hidden; }
  .page { width: 1304px; background: #131313; box-shadow: 0 0 12px #c8c4c2; padding: 0 14px; box-sizing: border-box; }

  .phead { display: flex; height: 72px; align-items: flex-start; }
  h1 { margin: 6px 0 0 16px; width: 376px; font: 700 26px/36px 'Noto Sans', sans-serif; color: #fff; }
  .nav { box-sizing: border-box; border: 4px solid #e6e6e6; border-radius: 10px; box-shadow: 2px 4px 5px #666, inset 2px 3px 4px #555; color: #eee; font-size: 13.200px; font-weight: 700; display: flex; align-items: center; justify-content: center; padding-top: 2px; }
  .first { width: 126px; height: 41px; margin: 11px 0 0 498px; }
  .second { width: 123px; height: 43px; margin: 9px 0 0 18px; }
  .funnel { margin: 14px 0 0 17px; }

  .kpis { display: flex; gap: 33px; padding-left: 9px; }
  .kpi { width: 285px; height: 79px; box-sizing: border-box; border: 2px solid #fff; border-radius: 12px; display: flex; justify-content: space-between; color: #fff; padding: 13px 11px 0 13px; background: linear-gradient(90deg, #ddd 0, #c4c4c4 7px, transparent 7px), linear-gradient(150deg, #4a4a4a 0, #848484 20%, #222 68%, #1c1c1c); box-shadow: 3px 4px 5px #444; }
  .kt { display: flex; flex-direction: column; align-items: flex-start; }
  .kl { font-size: 15.200px; font-weight: 700; line-height: 24px; }
  .kv { font: 500 23.500px/30px Roboto, sans-serif; margin-top: 5px; }

  .row { display: flex; }
  .r1 { margin-top: 19px; height: 183px; }
  .r2 { margin-top: 24px; height: 331px; }
  .card { background: #323232; border-radius: 12px; }
  .card text, .selected text { fill: #fff; font: 12.200px 'Noto Sans', sans-serif; }
  .card text.head, .selected text.head { font: 700 17px Roboto, sans-serif; }
  .card text.dark { fill: #173325; }
  .card text.axis { font-size: 13px; font-weight: 600; }
  .card text.axis.small { font-size: 10.500px; }
  .selected .legend text { font-size: 13.500px; }
  .selected { width: 401px; background: #323232; margin: 0 16px 0 13px; position: relative; }
  .selected > svg { overflow: visible; }
  .tools { position: absolute; right: 1px; top: -30px; display: flex; gap: 4px; }
  .tools i { width: 30.500px; height: 28px; background: #fff; }
  .stack { display: flex; flex-direction: column; gap: 17px; width: 417px; margin: 0 19px 0 13px; }

  .tabs { height: 44px; background: #fff; display: flex; font-size: 15.500px; color: #222; }
  .tab { display: flex; align-items: center; justify-content: center; border-left: 1px solid #aaa; box-sizing: border-box; border-bottom: 5px solid transparent; padding: 5px 1px 0 0; }
  .on { width: 116px; border-bottom-color: #117865; font-weight: 600; }
  .s { width: 86px; padding-right: 2px; }
  .add { width: 48px; background: #117865; display: flex; justify-content: center; align-items: center; padding-bottom: 3px; box-sizing: border-box; }

  .viz { width: 44px; border: 1px solid #ccc; border-width: 0 1px; box-sizing: border-box; display: flex; flex-direction: column; align-items: center; padding: 19px 5px 0 0; flex: none; }
  .viz svg { margin-left: 4px; }
  .viz span { writing-mode: vertical-rl; margin-top: 21px; font-weight: 600; font-size: 18.500px; color: #222; }
  .data { flex: 1; }
  .dh { display: flex; justify-content: space-between; align-items: center; padding: 15px 12px 0 10px; font-size: 19.500px; font-weight: 600; color: #222; }
  .ds { margin: 22px 5px 0 5px; height: 31px; box-sizing: border-box; border: 1px solid #bbb; border-bottom-color: #555; border-radius: 4px; background: #fff; display: flex; align-items: center; gap: 8px; padding-left: 14px; font-size: 17px; color: #666; }
  .field { display: flex; align-items: center; height: 30px; padding-left: 18px; gap: 0; }
  .ds + .field { margin-top: 10px; }

  .status { height: 29px; border-top: 1px solid #ccc; flex: none; display: flex; justify-content: space-between; padding: 0 20px 0 5px; box-sizing: border-box; }
  .status span { font-size: 15.300px; line-height: 31px; }
  .zoom { font-size: 14.600px; fill: #444; stroke: none; }
  .taskbar { flex: 1; background: #1c1c1c; border-top: 1px solid #000; display: flex; align-items: center; color: #fff; }
  .weather { display: flex; width: 389px; padding-left: 22px; gap: 6px; align-items: center; }
  .weather div { display: flex; flex-direction: column; align-items: flex-start; margin-top: -2px; }
  .weather svg { margin-top: -6px; }
  .dim { color: #c8c8c8; }
  .badge { font-size: 13px; fill: #222; }
  .pill { width: 125px; height: 40px; border-radius: 20px; background: #2b2b2b; margin-left: 18px; display: flex; align-items: center; padding-left: 29px; gap: 6px; box-sizing: border-box; font-weight: 500; }
  .apps { display: flex; margin-left: 4px; }
  .app { width: 55px; height: 50px; display: flex; align-items: center; justify-content: center; position: relative; }
  .app svg { overflow: visible; }
  .cur { background: #2d2d2d; background-clip: content-box; padding: 0 2.500px; box-sizing: border-box; border-radius: 8px; }
  .run::after, .cur::after { content: ''; position: absolute; bottom: -1px; width: 7px; height: 4px; border-radius: 2px; background: #999; }
  .cur::after { width: 20px; background: #6fd3dc; bottom: 1px; }
  .amz { font: 700 27px Roboto, sans-serif; fill: #111; }
  .cal { font: italic 900 19px Roboto, sans-serif; fill: #111; }
  .fx { font: italic 24px 'Liberation Serif', serif; fill: #222; }
  .tray { display: flex; align-items: center; margin-left: auto; padding-right: 24px; }
  .up { margin-right: 1px; }
  .lang { display: flex; flex-direction: column; align-items: center; width: 32px; margin: 0 20px 0 24px; }
  .clock { display: flex; flex-direction: column; align-items: flex-end; width: 97px; }
</style>
